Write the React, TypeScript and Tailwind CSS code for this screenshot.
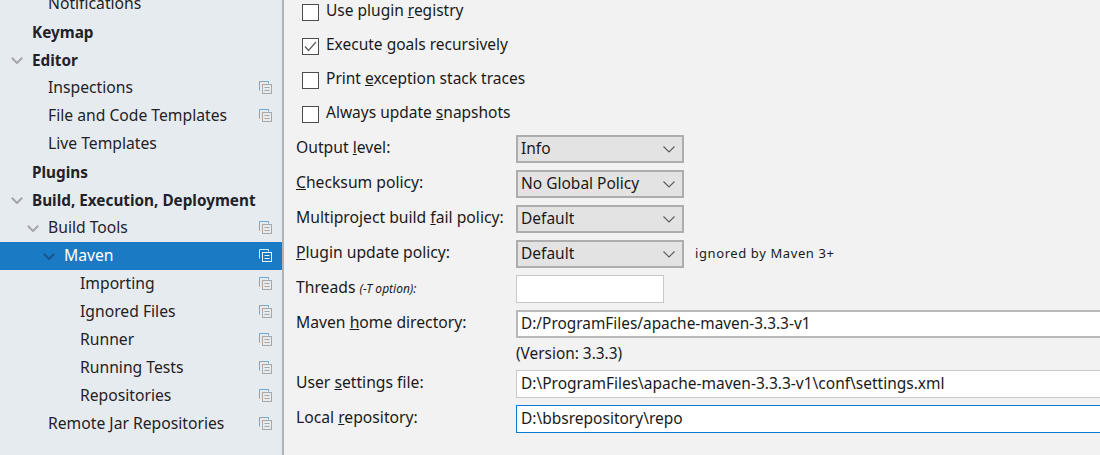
import type { ReactNode } from "react"

const font = "font-['Noto_Sans',sans-serif]"

function CopyIcon({ selected }: { selected?: boolean }) {
  return (
    <svg width="13" height="13" viewBox="0 0 13 13" fill="none" className="mt-[-2px] shrink-0">
      <path d="M.5 9.5V.5h9v2" stroke={selected ? "#d6e8f7" : "#6fa8d2"} />
      <rect x="3.5" y="3.5" width="9" height="9" stroke={selected ? "#f0f4f8" : "#a8a8a8"} fill={selected ? "#1a7bc4" : "#e6ebf0"} />
      <path d="M5.5 6.5h5M5.5 9.5h5" stroke={selected ? "#f0f4f8" : "#a8a8a8"} />
    </svg>
  )
}

function TreeRow({
  label,
  depth,
  bold,
  open,
  copy,
  selected,
}: {
  label: string
  depth: number
  bold?: boolean
  open?: boolean
  copy?: boolean
  selected?: boolean
}) {
  const indent = ["pl-[32px]", "pl-[48px]", "pl-[64px]", "pl-[80px]"][depth]
  return (
    <div className={`relative flex h-[28px] items-center pr-[10px] ${indent} ${selected ? "bg-[#1a7bc4] text-white" : "text-[#1f2226]"}`}>
      {open && (
        <svg width="12" height="7" viewBox="0 0 12 7" fill="none" className="absolute ml-[-21px]">
          <path d="M.8.8 6 6 11.2.8" stroke={selected ? "#15568c" : "#a3a7ab"} strokeWidth="2" />
        </svg>
      )}
      <span className={`flex-1 ${bold ? "text-[15.3px] font-bold" : ""}`}>{label}</span>
      {copy && <CopyIcon selected={selected} />}
    </div>
  )
}

function CheckRow({ checked, children }: { checked?: boolean; children: ReactNode }) {
  return (
    <div className="flex h-[34px] items-center gap-[7px] pl-[18px]">
      <div className="flex h-[17px] w-[17px] items-center justify-center border border-[#4d4d4d] bg-white">
        {checked && (
          <svg width="13" height="11" viewBox="0 0 13 11" fill="none">
            <path d="M1 5.5 4.5 9.5 12 1" stroke="#5c5c5c" strokeWidth="1.2" />
          </svg>
        )}
      </div>
      <span className="mt-[-2px] text-[15.5px]">{children}</span>
    </div>
  )
}

function FormRow({ label, children }: { label: ReactNode; children: ReactNode }) {
  return (
    <div className="flex h-[28px] items-center">
      <div className="mt-[-2px] w-[232px] shrink-0 pl-[12px]">{label}</div>
      {children}
    </div>
  )
}

function Select({ value }: { value: string }) {
  return (
    <div className="flex h-[28px] w-[168px] items-center justify-between border-2 border-[#adadad] bg-[#e3e3e3] pl-[3px] pr-[7px] text-[15.5px]">
      <span>{value}</span>
      <svg width="12" height="7" viewBox="0 0 12 7" fill="none">
        <path d="M.5.5 6 6 11.5.5" stroke="#5a5a5a" strokeWidth="1.1" />
      </svg>
    </div>
  )
}

export default function App() {
  return (
    <div className={`flex h-[455px] w-[1100px] overflow-hidden bg-[#f2f2f2] text-[15.7px] text-[#1a1a1a] ${font}`}>
      <aside className="w-[284px] shrink-0 border-r-2 border-[#b3b3b3] bg-[#e6ebf0]">
        <div className="mt-[-10px]">
          <TreeRow label="Notifications" depth={1} />
          <TreeRow label="Keymap" depth={0} bold />
          <TreeRow label="Editor" depth={0} bold open />
          <TreeRow label="Inspections" depth={1} copy />
          <TreeRow label="File and Code Templates" depth={1} copy />
          <TreeRow label="Live Templates" depth={1} />
          <TreeRow label="Plugins" depth={0} bold />
          <TreeRow label="Build, Execution, Deployment" depth={0} bold open />
          <TreeRow label="Build Tools" depth={1} open copy />
          <TreeRow label="Maven" depth={2} open copy selected />
          <TreeRow label="Importing" depth={3} copy />
          <TreeRow label="Ignored Files" depth={3} copy />
          <TreeRow label="Runner" depth={3} copy />
          <TreeRow label="Running Tests" depth={3} copy />
          <TreeRow label="Repositories" depth={3} copy />
          <TreeRow label="Remote Jar Repositories" depth={1} copy />
        </div>
      </aside>

      <main className="min-w-0 flex-1">
        <div className="mt-[-5px]">
          <CheckRow>Use plugin <u>r</u>egistry</CheckRow>
          <CheckRow checked>Execute <u>g</u>oals recursively</CheckRow>
          <CheckRow>Print <u>e</u>xception stack traces</CheckRow>
          <CheckRow>Always update <u>s</u>napshots</CheckRow>
        </div>

        <div className="mt-[4px] flex flex-col gap-[7px]">
          <FormRow label={<>Output <u>l</u>evel:</>}>
            <Select value="Info" />
          </FormRow>
          <FormRow label={<><u>C</u>hecksum policy:</>}>
            <Select value="No Global Policy" />
          </FormRow>
          <FormRow label={<>Multiproject build <u>f</u>ail policy:</>}>
            <Select value="Default" />
          </FormRow>
          <FormRow label={<><u>P</u>lugin update policy:</>}>
            <Select value="Default" />
            <span className="ml-[11px] text-[13px] tracking-[0.6px]">ignored by Maven 3+</span>
          </FormRow>
          <FormRow
            label={
              <>
                Threads <span className="text-[12px] italic">(-T option):</span>
              </>
            }
          >
            <div className="h-[28px] w-[148px] border border-[#c8c8c8] bg-white" />
          </FormRow>
          <FormRow label={<>Maven <u>h</u>ome directory:</>}>
            <div className="flex h-[28px] flex-1 items-center border-y-2 border-l-2 border-[#b8b8b8] bg-white pl-[3px] text-[15.4px]">
              D:/ProgramFiles/apache-maven-3.3.3-v1
            </div>
          </FormRow>
        </div>

        <div className="flex h-[32px] items-center pl-[232px] text-[15.4px]">(Version: 3.3.3)</div>

        <div className="flex flex-col gap-[7px]">
          <FormRow label={<>User <u>s</u>ettings file:</>}>
            <div className="flex h-[28px] flex-1 items-center border-y border-l border-[#c8c8c8] bg-white pl-[4px] text-[15.5px]">
              D:\ProgramFiles\apache-maven-3.3.3-v1\conf\settings.xml
            </div>
          </FormRow>
          <FormRow label={<>Local <u>r</u>epository:</>}>
            <div className="flex h-[28px] flex-1 items-center border-y border-l border-[#0a7bd1] bg-white pl-[4px] text-[15.5px]">
              D:\bbsrepository\repo
            </div>
          </FormRow>
        </div>
      </main>
    </div>
  )
}
